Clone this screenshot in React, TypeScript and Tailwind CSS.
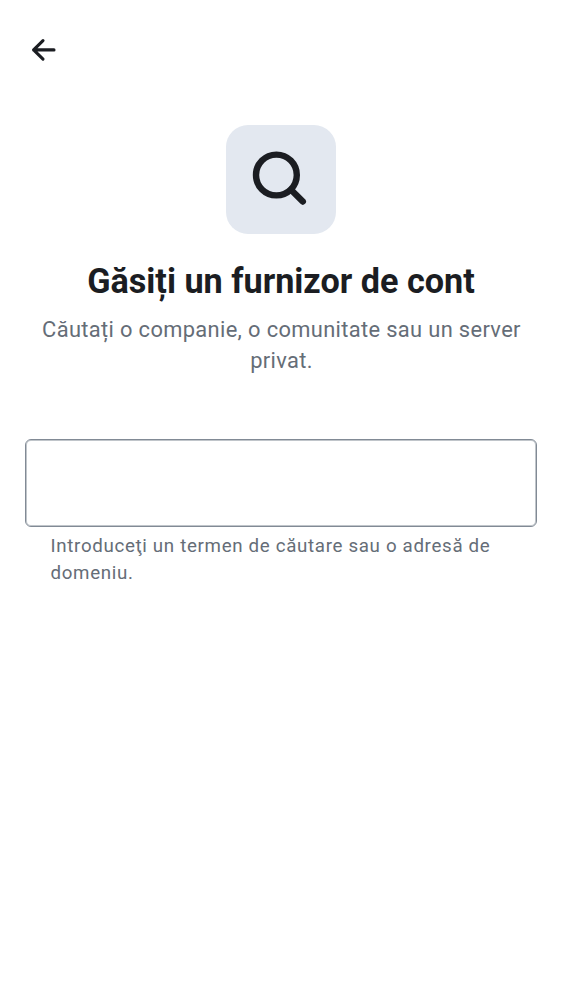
export default function App() {
  return (
    <main className="flex h-[1000px] w-[562px] flex-col bg-white px-[25px] font-['Roboto',sans-serif] text-[#1b1d22]">
      <header className="flex h-[99px] items-center pl-[6px]">
        <button aria-label="Înapoi">
          <svg width="25" height="25" viewBox="0 0 25 25" fill="none" stroke="currentColor" strokeWidth="3.1" strokeLinecap="round" strokeLinejoin="round">
            <path d="M12 3.6L2.6 12.9L12 22.2M2.6 12.9H23" />
          </svg>
        </button>
      </header>
      <section className="flex flex-col items-center pt-[26px] text-center">
        <div className="flex h-[109px] w-[110px] items-center justify-center rounded-[22px] bg-[#e3e8f0]">
          <svg width="110" height="109" viewBox="0 0 110 109" fill="none" stroke="currentColor" strokeWidth="6.4" strokeLinecap="round">
            <circle cx="50.4" cy="50" r="20.4" />
            <path d="M65 64.7L76.8 76.5" />
          </svg>
        </div>
        <h1 className="mt-[26px] text-[34.2px] leading-[42px] font-bold whitespace-nowrap">Găsiți un furnizor de cont</h1>
        <p className="mt-[12px] pl-px text-[21.86px] leading-[31px] tracking-[0.35px] text-[#656d77]">Căutați o companie, o comunitate sau un server<br />privat.</p>
      </section>
      <section className="mt-[63px]">
        <input aria-label="Căutare" className="block h-[88px] w-full rounded-[6px] border border-[#818a95] px-6 text-[25px] shadow-[inset_0_0_0_1px_#c0c5ca] outline-none" />
        <p className="mt-[6px] pl-[25.5px] text-[18.73px] leading-[27px] tracking-[0.67px] text-[#656d77]">Introduceţi un termen de căutare sau o adresă de<br />domeniu.</p>
      </section>
    </main>
  );
}
